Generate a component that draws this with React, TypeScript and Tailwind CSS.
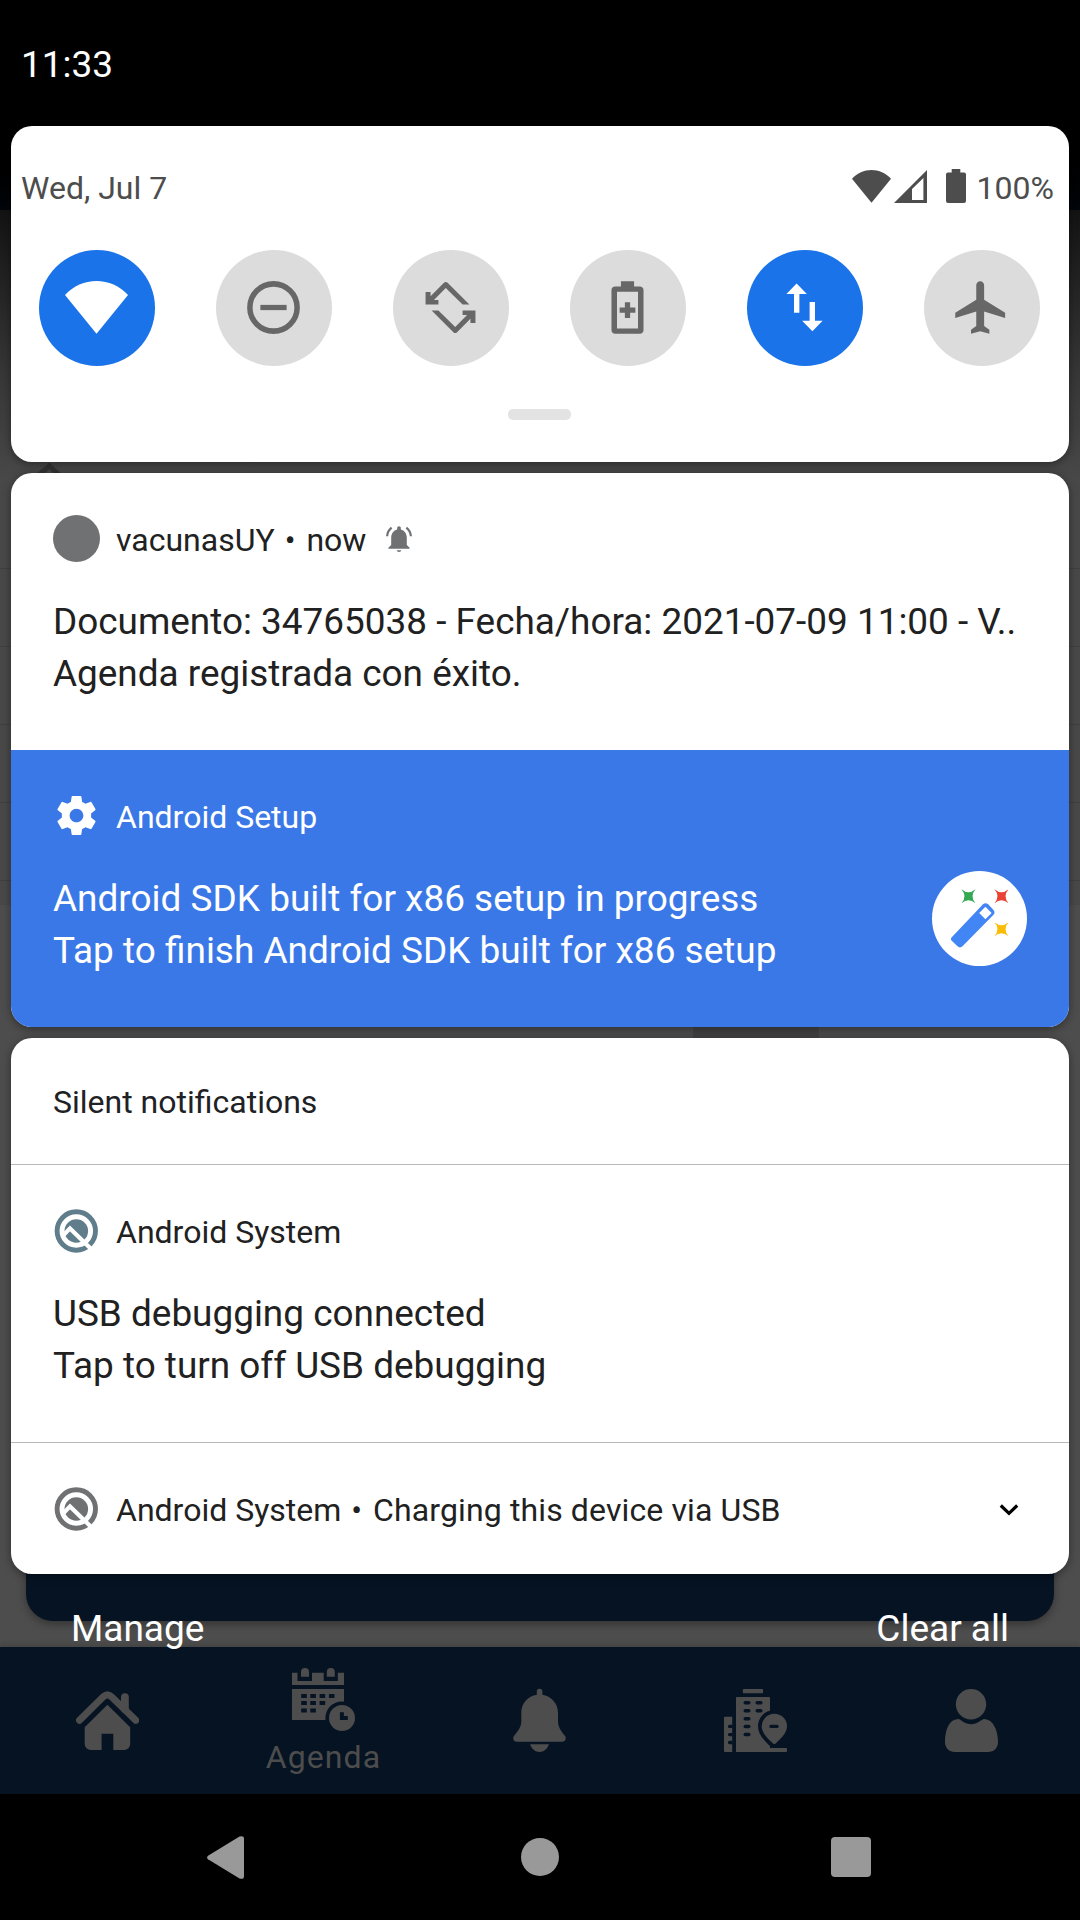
import type { ReactNode } from "react";

function WifiFull({ className }: { className: string }) {
  return (
    <svg viewBox="0 0 24 24" className={className} fill="currentColor">
      <path d="M12 22 24 7.2C20.8 3.8 16.5 1.9 12 1.9S3.2 3.8 0 7.2Z" />
    </svg>
  );
}

function Tile({ active, children }: { active?: boolean; children: ReactNode }) {
  return (
    <div
      className={
        active
          ? "flex size-[116px] items-center justify-center rounded-full bg-[#1a73e8] text-white"
          : "flex size-[116px] items-center justify-center rounded-full bg-[#dcdcdc] text-[#676767]"
      }
    >
      {children}
    </div>
  );
}

function TileIcon({ children }: { children: ReactNode }) {
  return (
    <svg viewBox="0 0 24 24" className="mr-px mb-px size-[63px]" fill="currentColor">
      {children}
    </svg>
  );
}

function SystemLogo({ className }: { className: string }) {
  return (
    <svg viewBox="0 0 60 60" className={className}>
      <circle cx="30.3" cy="30" r="19.2" fill="none" stroke="currentColor" strokeWidth="4.9" />
      <circle cx="30.3" cy="30" r="11.8" fill="currentColor" />
      <path d="M16.6 35 24 27.4 49.5 52.2" fill="none" stroke="#fff" strokeWidth="4.2" />
    </svg>
  );
}

function NotificationHeader({ icon, children }: { icon: ReactNode; children: ReactNode }) {
  return (
    <div className="flex h-12 items-center text-[32px] leading-[48px]">
      <div className="mr-[16px] mb-[3px] -ml-px flex size-[48px] items-center justify-center">{icon}</div>
      {children}
    </div>
  );
}

function Dot() {
  return <span className="mr-[11px] ml-[10px]">•</span>;
}

function QuickSettings() {
  return (
    <section className="flex h-[336px] flex-col rounded-[21px] bg-white shadow-[0_2px_8px_rgba(0,0,0,0.4)]">
      <div className="mt-[38px] flex h-12 items-center justify-between pr-[15px] pl-[10px] text-[32px] leading-[48px] text-[#4d4d4d]">
        <span>Wed, Jul 7</span>
        <div className="flex items-center">
          <WifiFull className="mr-[3px] mb-[3px] size-[39px]" />
          <svg viewBox="0 0 33 33" className="mr-[19px] mb-[3px] size-[33px]" fill="currentColor">
            <path fillRule="evenodd" d="M0 33 33 0V33ZM18 19V30H29.4V8Z" />
          </svg>
          <svg viewBox="0 0 20 34" className="mr-[11px] mb-[4px] h-[34px] w-[20px]" fill="currentColor">
            <path d="M5.7 0h8.6v3.4H18a2 2 0 0 1 2 2V32a2 2 0 0 1-2 2H2a2 2 0 0 1-2-2V5.4a2 2 0 0 1 2-2h3.7Z" />
          </svg>
          <span>100%</span>
        </div>
      </div>
      <div className="mt-[38px] flex justify-between pr-[29px] pl-[28px]">
        <Tile active>
          <WifiFull className="mr-[2px] mb-px size-[63px]" />
        </Tile>
        <Tile>
          <TileIcon>
            <circle cx="12" cy="12" r="9" fill="none" stroke="currentColor" strokeWidth="2.1" />
            <path d="M7 11h10v2H7z" />
          </TileIcon>
        </Tile>
        <Tile>
          <TileIcon>
            <path d="M2.5 6.1h1.9v1.6L9.5 2.6a1 1 0 0 1 1.4 0L19.2 10.9H16.6L10.2 4.6 5.7 9.1H7.4V10.9H2.5Z" />
            <path
              transform="rotate(180 12 12)"
              d="M2.5 6.1h1.9v1.6L9.5 2.6a1 1 0 0 1 1.4 0L19.2 10.9H16.6L10.2 4.6 5.7 9.1H7.4V10.9H2.5Z"
            />
          </TileIcon>
        </Tile>
        <Tile>
          <TileIcon>
            <path
              fillRule="evenodd"
              d="M9.500 2h5v2h2.200c.8 0 1.400.6 1.400 1.300v15.400c0 .7-.6 1.300-1.400 1.300H7.300c-.8 0-1.400-.6-1.400-1.300V5.300C5.900 4.600 6.500 4 7.300 4h2.200ZM8 6v14h8V6Z"
            />
            <path d="M11 10h2v2h2v2h-2v2h-2v-2H9v-2h2z" />
          </TileIcon>
        </Tile>
        <Tile active>
          <TileIcon>
            <path d="M9 2.900 12.900 6.900H10.050V14H8V6.900H5.100Z" />
            <path d="M15 21 11.100 17H13.950V9.900H16V17H18.900Z" />
          </TileIcon>
        </Tile>
        <Tile>
          <TileIcon>
            <path d="M21 16v-2l-8-5V3.500c0-.83-.67-1.500-1.500-1.500S10 2.670 10 3.500V9l-8 5v2l8-2.500V19l-2 1.500V22l3.500-1 3.500 1v-1.500L13 19v-5.500l8 2.500z" />
          </TileIcon>
        </Tile>
      </div>
      <div className="mt-[43px] mr-[2px] h-[11px] w-[63px] self-center rounded-[5px] bg-[#e3e3e3]" />
    </section>
  );
}

function WandIcon() {
  const star = "M-7-7Q0-1 7-7 1 0 7 7 0 1-7 7-1 0-7-7Z";
  return (
    <svg viewBox="0 0 95 95" className="size-[95px] rounded-full bg-white">
      <path
        d="M20 66 51 33.300Q53.600 31 56.200 33.300L61.500 39Q63.500 41.500 61.500 43.800L30.500 75.300Q28 77.500 25.500 75.300L20 70Q17.800 68 20 66Z"
        fill="#4285f4"
      />
      <path d="M53.400 35.800 59.600 42 53.400 48.200 47.200 42Z" fill="#fff" />
      <path transform="translate(36.500 25.300)" d={star} fill="#34a853" />
      <path transform="translate(69.500 25.300)" d={star} fill="#ea4335" />
      <path transform="translate(69.500 58.300)" d={star} fill="#fbbc04" />
    </svg>
  );
}

function AlertingNotifications() {
  return (
    <section className="mt-[11px] overflow-hidden rounded-[21px] bg-white text-[#212121] shadow-[0_2px_8px_rgba(0,0,0,0.4)]">
      <article className="h-[277px] px-[42px] pt-[43px]">
        <NotificationHeader icon={<span className="size-[47px] rounded-full bg-[#707173]" />}>
          <span>vacunasUY</span>
          <Dot />
          <span>now</span>
          <svg viewBox="0 0 24 24" className="mb-[2px] ml-[20px] size-[26px] text-[#707173]" fill="currentColor">
            <path d="M12 24c1.200 0 2-.8 2-1.600h-4C10 23.200 10.800 24 12 24Z" />
            <path d="M19.200 17.500V11c0-3.900-2.200-6.900-5.500-7.700V2c0-1-.7-1.700-1.700-1.700s-1.700.7-1.700 1.700v1.300C7 4.100 4.800 7.100 4.800 11v6.500L2.200 20v.9h19.600V20Z" />
            <path
              d="M1 9.500C1.200 6.300 2.800 3.400 5.200 1.500M23 9.500c-.2-3.200-1.800-6.100-4.200-8"
              fill="none"
              stroke="currentColor"
              strokeWidth="2"
            />
          </svg>
        </NotificationHeader>
        <div className="mt-[32px] text-[36.920px] leading-[52.300px] whitespace-nowrap">
          <p>Documento: 34765038 - Fecha/hora: 2021-07-09 11:00 - V..</p>
          <p>Agenda registrada con éxito.</p>
        </div>
      </article>
      <article className="flex h-[277px] justify-between bg-[#3b78e7] px-[42px] pt-[43px] text-white">
        <div>
          <NotificationHeader
            icon={
              <svg viewBox="0 0 24 24" className="size-[47px]" fill="currentColor">
                <path d="M19.430 12.980c.04-.32.07-.64.07-.98s-.03-.66-.07-.98l2.110-1.650c.19-.15.24-.42.12-.64l-2-3.460c-.12-.22-.39-.3-.61-.22l-2.490 1c-.52-.4-1.080-.73-1.690-.98l-.38-2.650C14.460 2.180 14.250 2 14 2h-4c-.25 0-.46.18-.49.42l-.38 2.650c-.61.25-1.170.59-1.690.98l-2.490-1c-.23-.09-.49 0-.61.22l-2 3.460c-.13.22-.07.49.12.64l2.110 1.650c-.04.32-.07.65-.07.98s.03.66.07.98l-2.110 1.650c-.19.15-.24.42-.12.64l2 3.460c.12.22.39.3.61.22l2.490-1c.52.4 1.080.73 1.690.98l.38 2.650c.03.24.24.42.49.42h4c.25 0 .46-.18.49-.42l.38-2.650c.61-.25 1.170-.59 1.690-.98l2.490 1c.23.09.49 0 .61-.22l2-3.460c.12-.22.07-.49-.12-.64l-2.110-1.650zM12 15.500c-1.930 0-3.500-1.570-3.500-3.500s1.570-3.500 3.500-3.500 3.500 1.570 3.500 3.500-1.570 3.500-3.500 3.500z" />
              </svg>
            }
          >
            <span>Android Setup</span>
          </NotificationHeader>
          <div className="mt-[32px] text-[36.960px] leading-[52.300px] whitespace-nowrap">
            <p>Android SDK built for x86 setup in progress</p>
            <p>Tap to finish Android SDK built for x86 setup</p>
          </div>
        </div>
        <div className="mt-[78px]">
          <WandIcon />
        </div>
      </article>
    </section>
  );
}

function SilentNotifications() {
  return (
    <section className="mt-[11px] rounded-[21px] bg-white text-[#212121] shadow-[0_2px_8px_rgba(0,0,0,0.4)]">
      <h2 className="h-[126px] px-[42px] pt-[40px] text-[32px] leading-[48px] text-[#202124]">
        Silent notifications
      </h2>
      <article className="h-[279px] border-y border-[#b8b8b8] px-[42px] pt-[43px]">
        <NotificationHeader icon={<SystemLogo className="size-[60px] shrink-0 text-[#607d8b]" />}>
          <span>Android System</span>
        </NotificationHeader>
        <div className="mt-[32px] text-[36.920px] leading-[52.300px]">
          <p>USB debugging connected</p>
          <p>Tap to turn off USB debugging</p>
        </div>
      </article>
      <article className="flex h-[131px] items-start justify-between pt-[43px] pr-[50px] pl-[42px]">
        <NotificationHeader icon={<SystemLogo className="size-[60px] shrink-0 text-[#707173]" />}>
          <span>Android System</span>
          <Dot />
          <span className="tracking-[0.120px]">Charging this device via USB</span>
        </NotificationHeader>
        <svg viewBox="0 0 20 14" className="mt-[17px] h-[14px] w-[20px]">
          <path d="M1.800 2.500 10 10.300 18.200 2.500" fill="none" stroke="#000" strokeWidth="3.200" />
        </svg>
      </article>
    </section>
  );
}

function NavItem({ children }: { children: ReactNode }) {
  return <div className="flex h-full w-[216px] flex-col items-center pr-[2px]">{children}</div>;
}

function AppTabs() {
  const rows = [28, 35, 42.5];
  return (
    <nav className="flex h-[147px] bg-[#061322] text-[#4d4d4d]">
      <NavItem>
        <svg viewBox="0 0 63 60" className="mt-[43px] h-[60px] w-[63px]" fill="currentColor">
          <path
            d="M3.500 30.300 27.500 6.600Q31.400 3.200 35.300 6.600L59.700 30.300"
            fill="none"
            stroke="currentColor"
            strokeWidth="7"
            strokeLinecap="round"
          />
          <path d="M48.900 7.200V19" stroke="currentColor" strokeWidth="7.800" strokeLinecap="round" />
          <path d="M31.400 14.700 54.200 37.300V54a6 6 0 0 1-6 6H37.300V43.700H25.600V60H14.700a6 6 0 0 1-6-6V37.300Z" />
        </svg>
      </NavItem>
      <NavItem>
        <svg viewBox="0 0 67 66" className="mt-[19px] h-[66px] w-[67px]" fill="currentColor">
          <path d="M2 6.700H7.500V15H22V6.700H33.700V15H47.800V6.700H54V19H2Z" />
          <path d="M11 10.700V6a4 4 0 0 1 8 0V10.700ZM36.800 10.700V6a4 4 0 0 1 8 0V10.700Z" />
          <path d="M2 23H54V54H2Z" />
          {rows.map((y, row) =>
            [11.200, 20.300, 29.600, 38.900].slice(0, 4 - row).map((x) => (
              <rect key={`${x}-${y}`} x={x} y={y} width="5.600" height="4" fill="#061322" />
            )),
          )}
          <circle cx="52" cy="52" r="16.600" fill="#061322" />
          <circle cx="52" cy="52" r="13" />
          <path d="M49.900 46.300h4V50h3.900v4h-7.900Z" fill="#061322" />
        </svg>
        <span className="mt-px ml-px text-[32px] leading-[48px] tracking-[1.100px]">Agenda</span>
      </NavItem>
      <NavItem>
        <svg viewBox="0 0 55 65" className="mt-[41px] h-[65px] w-[55px]" fill="currentColor">
          <path d="M24.800 3.500a2.800 2.800 0 0 1 5.600 0V6.800C39 8.200 46 15 46 25V33C46 39 49 43 52.500 47.200 55 50 53.500 53.700 50 53.700H5C1.500 53.700 0 50 2.500 47.200 6 43 9.300 39 9.300 33V25C9.300 15 16 8.200 24.800 6.800Z" />
          <path d="M18 56.300H37C35 61.500 31.500 64 27.500 64S20 61.500 18 56.300Z" />
        </svg>
      </NavItem>
      <NavItem>
        <svg viewBox="0 0 65 65" className="mt-[41px] size-[65px]" fill="currentColor">
          <rect x="19.800" y="1" width="20.300" height="4.300" rx="1" />
          <path d="M14 9H46a1 1 0 0 1 1 1V60H63a1 1 0 0 1 1 1V63a1 1 0 0 1-1 1H13V10a1 1 0 0 1 1-1Z" />
          <path d="M2 28.700H9.200V64H2a1 1 0 0 1-1-1V29.700a1 1 0 0 1 1-1Z" />
          <g fill="#061322">
            {[36.700, 44.900, 52.800].map((y) => (
              <path key={y} transform={`translate(5 ${y})`} d="M1.600 0H4.400V3.400H1.600a1.700 1.700 0 0 1 0-3.400Z" />
            ))}
            {[13, 21, 29, 36.800, 44.800].map((y) => (
              <rect key={y} x="20.500" y={y} width="7" height="3.400" rx="1.700" />
            ))}
            <rect x="32.500" y="13" width="7" height="3.400" rx="1.700" />
            <rect x="32.500" y="21" width="7" height="3.400" rx="1.700" />
            <path d="M51.300 22C42 22 35 29.500 35 38.300 35 46 41 52.500 47 58V60H64.500V22Z" />
          </g>
          <path
            fillRule="evenodd"
            d="M51.300 25.700A12.600 12.600 0 0 1 64 38.300C64 45.500 56.500 52 52.600 55.500Q51.300 56.500 50 55.500C46 52 38.700 45.500 38.700 38.300A12.600 12.600 0 0 1 51.300 25.700ZM48 36.700a1.700 1.700 0 0 0 0 3.400h6a1.700 1.700 0 0 0 0-3.400Z"
          />
        </svg>
      </NavItem>
      <NavItem>
        <svg viewBox="0 0 55 65" className="mt-[41px] h-[65px] w-[55px]" fill="currentColor">
          <ellipse cx="27" cy="16.200" rx="15.200" ry="15.200" />
          <path d="M14 31C16 31 17 32.500 19 33.800 24 37 30.500 37 35 33.800 37 32.500 38.500 31 40.500 31 49 31.500 54 42 54 54 54 60 50 64 44 64H11C5 64 1 60 1 54 1 42 5 31.500 14 31Z" />
        </svg>
      </NavItem>
    </nav>
  );
}

function BackgroundApp() {
  return (
    <div className="flex h-[1920px] flex-col bg-[#4d4d4d] [grid-area:1/1]">
      <div className="h-[210px] bg-linear-to-b from-black from-60% to-[#01060b]" />
      <div className="flex h-[695px] flex-col bg-[linear-gradient(#131313_0px,#383838_170px,#484848_270px)]">
        <svg viewBox="0 0 24 14" className="mt-[252px] ml-[37px] h-[14px] w-[24px]">
          <path d="M0 14.500 12.200 4 24 14.500" fill="none" stroke="#333" strokeWidth="5" />
        </svg>
        <div className="mt-[92px] h-[313px] border-y border-[#404040]">
          <div className="mt-[77px] h-[79px] border-y border-[#404040]" />
          <div className="mt-[77px] border-t border-[#404040]" />
        </div>
      </div>
      <div className="mt-[119px] ml-[693px] h-20 w-[126px] rounded-[6px] bg-[#424242]" />
      <div className="mx-[26px] mt-[296px] h-[221px] rounded-[27px] bg-[#061322] shadow-[0_3px_9px_rgba(0,0,0,0.350)]" />
      <div className="mt-[26px] shadow-[0_-2px_6px_rgba(0,0,0,0.150)]">
        <AppTabs />
      </div>
      <div className="flex h-[126px] items-center justify-between bg-black pr-[209px] pl-[207px] text-[#999]">
        <svg viewBox="0 0 37 43" className="h-[43px] w-[37px]" fill="currentColor">
          <path d="M1 19.700 32.500.6Q37 -1 37 3V40Q37 44 32.500 42.400L1 23.300Q-.8 21.500 1 19.700Z" />
        </svg>
        <div className="ml-[5px] size-[38px] rounded-full bg-[#999]" />
        <div className="size-[40px] rounded-[4px] bg-[#999]" />
      </div>
    </div>
  );
}

export default function App() {
  return (
    <main className="grid h-[1920px] w-[1080px] overflow-hidden bg-black font-[Roboto,sans-serif]">
      <BackgroundApp />
      <div className="z-10 flex flex-col px-[11px] [grid-area:1/1]">
        <header className="h-[126px] pt-[41px] pl-[10px] text-[37px] leading-[48px] text-white">11:33</header>
        <QuickSettings />
        <AlertingNotifications />
        <SilentNotifications />
        <footer className="mt-[31px] flex justify-between pr-[60px] pl-[60px] text-[37px] leading-[48px] text-white">
          <span>Manage</span>
          <span>Clear all</span>
        </footer>
      </div>
    </main>
  );
}
